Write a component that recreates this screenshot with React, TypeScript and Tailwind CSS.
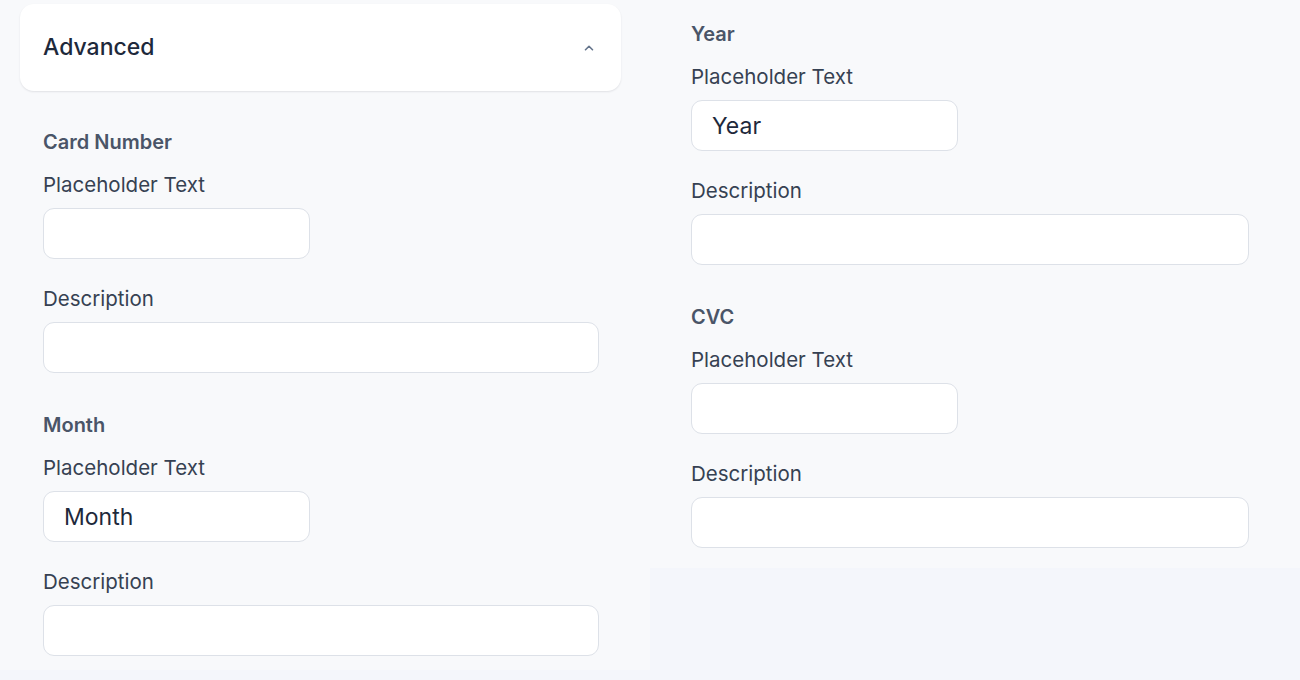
import { ChevronUp } from 'lucide-react'

const fieldInput = 'block h-[51px] rounded-[11px] border border-[#dde1e8] bg-white px-5 text-[23px] text-[#1e293b] outline-none'

function Field({ title, value, className, wide }: { title: string; value?: string; className?: string; wide?: boolean }) {
  return (
    <div className={className}>
      <div className="h-[24px] text-[20px] leading-[24px] font-semibold text-[#4a5568]">{title}</div>
      <div className="mt-[18px] h-[26px] text-[20.5px] leading-[26px] text-[#364152]">Placeholder Text</div>
      <input className={`${fieldInput} mt-[10px] w-[267px]`} defaultValue={value} />
      <div className="mt-[27px] h-[26px] text-[20.5px] leading-[26px] text-[#364152]">Description</div>
      <input className={`${fieldInput} mt-[10px] ${wide ? 'w-[558px]' : 'w-[556px]'}`} />
    </div>
  )
}

export default function App() {
  return (
    <div
      className="flex h-[680px] w-[1300px] items-start bg-[#f4f6fb]"
      style={{ fontFamily: 'Inter, "Noto Sans", sans-serif' }}
    >
      {/* Left column */}
      <div className="h-[670px] w-[650px] bg-[#f8f9fb] px-5 pt-1">
        <div className="flex h-[87px] w-[601px] items-center justify-between rounded-[14px] bg-white pl-[23px] pr-[25px] shadow-[0_1px_2px_rgba(15,23,42,0.1)]">
          <span className="text-[23px] font-medium text-[#1e293b]">Advanced</span>
          <ChevronUp size={14} strokeWidth={2.75} className="text-[#64748b]" />
        </div>
        <div className="pl-[23px]">
          <Field title="Card Number" className="mt-[39px]" />
          <Field title="Month" value="Month" className="mt-[40px]" />
        </div>
      </div>

      {/* Right column */}
      <div className="h-[568px] w-[650px] bg-[#f8f9fb] pl-[41px] pt-[22px]">
        <Field title="Year" value="Year" wide />
        <Field title="CVC" className="mt-[40px]" wide />
      </div>
    </div>
  )
}
